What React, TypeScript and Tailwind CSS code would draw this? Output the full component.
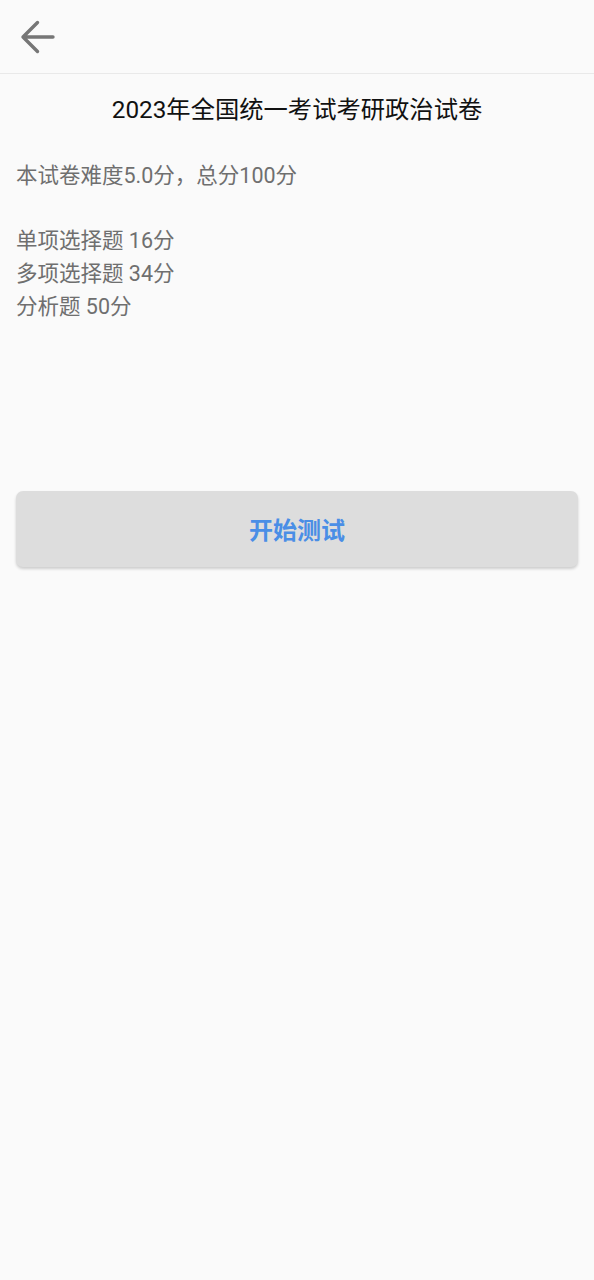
export default function App() {
  const sections = ["单项选择题 16分", "多项选择题 34分", "分析题 50分"];

  return (
    <div className="min-h-[1280px] w-full bg-[#fafafa] font-['Roboto','Noto_Sans_CJK_SC',sans-serif]">
      {/* 顶部导航 */}
      <header className="flex h-[74px] items-center border-b border-[#e9e9e9] px-[18px]">
        <button className="flex h-[38px] w-[38px] items-center justify-center">
          <svg width="36" height="34" viewBox="0 0 36 34" fill="none">
            <path
              d="M34 17H4M18.5 2.5L4 17l14.5 14.5"
              stroke="#767676"
              strokeWidth="3.4"
              strokeLinecap="round"
              strokeLinejoin="round"
            />
          </svg>
        </button>
      </header>

      <main className="px-4">
        <h1 className="mt-[20px] text-center text-[24.3px] leading-[32px] text-[#111]">
          2023年全国统一考试考研政治试卷
        </h1>

        <p className="mt-[34px] text-[21.5px] leading-[32px] text-[#6f6f6f]">
          本试卷难度5.0分，总分100分
        </p>

        <div className="mt-[32px] text-[21.5px] leading-[33px] text-[#6f6f6f]">
          {sections.map((s) => (
            <p key={s}>{s}</p>
          ))}
        </div>

        <button className="mt-[168px] flex h-[76px] w-full items-center justify-center rounded-[7px] bg-[#dddddd] pt-[3px] text-[24px] font-bold text-[#4a8ee6] shadow-[0_2px_3px_rgba(0,0,0,0.18)]">
          开始测试
        </button>
      </main>
    </div>
  );
}
